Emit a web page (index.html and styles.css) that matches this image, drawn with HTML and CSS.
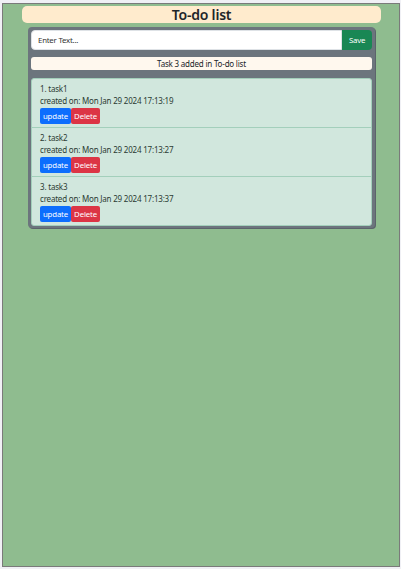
FILE: index.html
```html
<!DOCTYPE html>
<html>
<head>
<meta charset="utf-8">
<link rel="stylesheet" href="styles.css">
</head>
<body>
<div class="app">
  <h1 class="title">To-do list</h1>
  <div class="panel">
    <div class="entry">
      <input class="entry-input" type="text" placeholder="Enter Text...">
      <button class="btn btn-save">Save</button>
    </div>
    <div class="status">Task 3 added in To-do list</div>
    <ul class="list">
      <li class="item">
        <div class="item-name">1. task1</div>
        <div class="item-date">created on: Mon Jan 29 2024 17:13:19</div>
        <div class="actions"><button class="btn btn-update">update</button><button class="btn btn-delete">Delete</button></div>
      </li>
      <li class="item">
        <div class="item-name">2. task2</div>
        <div class="item-date">created on: Mon Jan 29 2024 17:13:27</div>
        <div class="actions"><button class="btn btn-update">update</button><button class="btn btn-delete">Delete</button></div>
      </li>
      <li class="item">
        <div class="item-name">3. task3</div>
        <div class="item-date">created on: Mon Jan 29 2024 17:13:37</div>
        <div class="actions"><button class="btn btn-update">update</button><button class="btn btn-delete">Delete</button></div>
      </li>
    </ul>
  </div>
</div>
</body>
</html>
```
FILE: styles.css
```css
html { background: #f0f0f5; }
body {
  margin: 0;
  padding: 3px 1px 2px 2px;
  font-family: "Noto Sans", "Open Sans", sans-serif;
  color: #212529;
}
.app {
  box-sizing: border-box;
  height: 564px;
  background: #8fbc8f;
  border: 1px solid #7a7a7a;
  padding: 2px 18px 0 19px;
}
.title {
  margin: 0;
  height: 17px;
  background: #ffebcd;
  border-radius: 5px;
  text-align: center;
  font-size: 14px;
  font-weight: 600;
  letter-spacing: -0.2px;
  line-height: 18px;
  color: #212529;
}
.panel {
  margin: 4px 6px 0 6px;
  background: #6c757d;
  border-radius: 4px;
  padding: 3px 3px 2px 3px;
  box-shadow: 1px 1px 0 #5c646b;
}
.entry {
  display: flex;
  height: 20px;
}
.entry-input {
  flex: 1;
  min-width: 0;
  box-sizing: border-box;
  border: 1px solid #dee2e6;
  border-radius: 4px 0 0 4px;
  padding: 0 6px;
  font-family: inherit;
  font-size: 7.8px;
  letter-spacing: -0.2px;
  color: #212529;
  background: #fff;
  outline: none;
}
.entry-input::placeholder { color: #333; }
.btn {
  border: 0;
  font-family: inherit;
  color: #fff;
  cursor: pointer;
}
.btn-save {
  width: 30px;
  background: #198754;
  border-radius: 0 4px 4px 0;
  font-size: 7.8px;
  letter-spacing: -0.2px;
  padding: 0;
}
.status {
  margin-top: 7px;
  height: 13px;
  background: #fff8ee;
  border-radius: 3px;
  text-align: center;
  font-size: 8px;
  letter-spacing: -0.2px;
  line-height: 13px;
  color: #212529;
}
.list {
  list-style: none;
  margin: 8px 0 0 0;
  padding: 0;
  background: #d1e7dd;
  border: 1px solid #a3cfbb;
  border-radius: 3px;
}
.item {
  padding: 4px 8px 3px 8px;
  border-bottom: 1px solid #a3cfbb;
  height: 41px;
}
.item:last-child { border-bottom: 0; }
.item-name, .item-date {
  font-size: 8px;
  letter-spacing: -0.2px;
  line-height: 12px;
  color: #2b3b33;
}
.actions { display: flex; margin-top: 1px; }
.btn-update, .btn-delete {
  height: 16px;
  font-size: 7.8px;
  letter-spacing: -0.15px;
  padding: 0;
  border-radius: 2px;
}
.btn-update { background: #0d6efd; width: 31px; }
.btn-delete { background: #dc3545; width: 29px; }
```
